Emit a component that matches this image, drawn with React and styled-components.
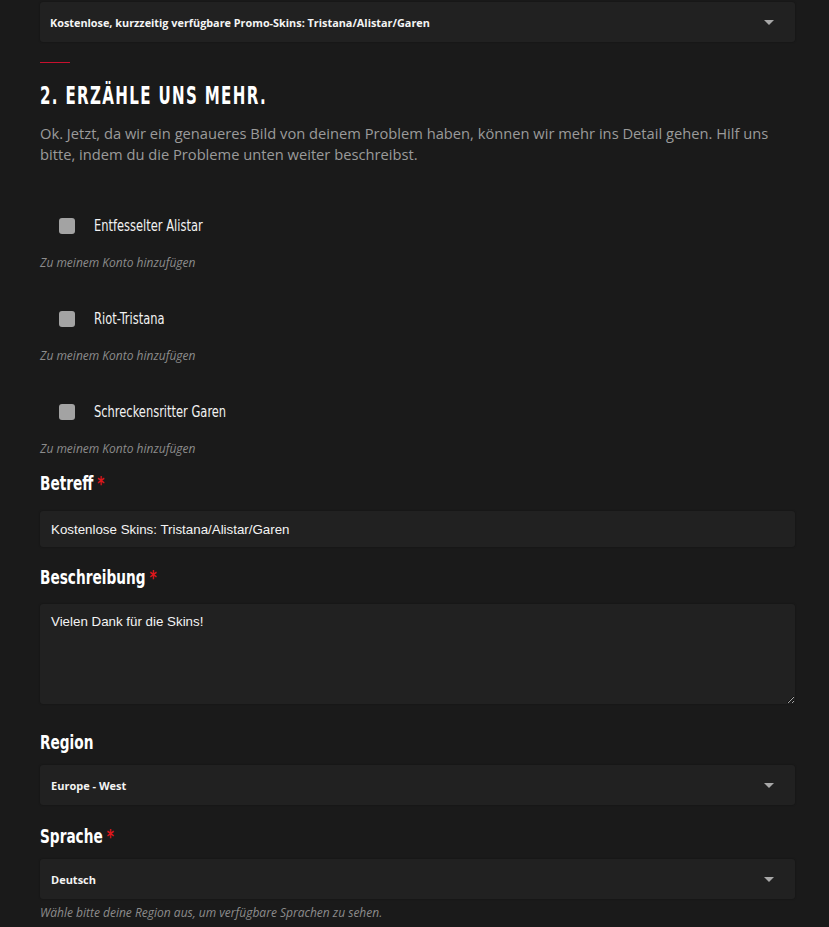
import React from "react";
import styled, { createGlobalStyle } from "styled-components";

const GlobalStyle = createGlobalStyle`
  html, body {
    margin: 0;
    padding: 0;
    background: #1a1a1a;
  }
  body {
    font-family: "Open Sans", "Liberation Sans", sans-serif;
    color: #f0f0f0;
  }
`;

const condensed = `"DejaVu Sans Condensed", "DejaVu Sans", sans-serif`;

const Page = styled.div`
  width: 755px;
  padding: 2px 0 10px 40px;
`;

const SelectBox = styled.div`
  display: flex;
  align-items: center;
  justify-content: space-between;
  height: 40px;
  margin-top: ${(p) => p.$top || 0}px;
  padding: 0 21px 0 ${(p) => p.$left || 11}px;
  background: #212121;
  border-radius: 3px;
  box-shadow: 0 0 2px rgba(0, 0, 0, 0.35);
  font-family: "Open Sans", sans-serif;
  font-weight: 700;
  font-size: ${(p) => p.$size || 11}px;
  color: #f4f4f4;
`;

const Caret = styled.span`
  width: 0;
  height: 0;
  border-left: 5px solid transparent;
  border-right: 5px solid transparent;
  border-top: 5px solid #a8a8a8;
`;

const RedRule = styled.div`
  width: 30px;
  height: 1px;
  margin-top: 20px;
  background: #c8102e;
`;

const Heading = styled.h2`
  margin: 18px 0 0;
  font-family: ${condensed};
  font-weight: 700;
  font-size: 25px;
  line-height: 30px;
  letter-spacing: 2px;
  color: #ffffff;
  white-space: nowrap;
  transform: scaleX(0.67);
  transform-origin: left center;
`;

const Intro = styled.p`
  margin: 12px 0 0;
  font-size: 14.7px;
  line-height: 21px;
  color: #9a9a9a;
`;

const SkinList = styled.div`
  margin-top: 45px;
  display: flex;
  flex-direction: column;
  gap: 32px;
`;

const SkinItem = styled.div`
  display: flex;
  flex-direction: column;
`;

const CheckRow = styled.label`
  display: flex;
  align-items: center;
  height: 32px;
  padding-left: 19px;
  gap: 19px;
`;

const CheckText = styled.span`
  display: inline-block;
  font-family: ${condensed};
  font-size: 15px;
  color: #f2f2f2;
  white-space: nowrap;
  transform: scaleX(0.85);
  transform-origin: left center;
`;

const Box = styled.span`
  width: 16px;
  height: 16px;
  border-radius: 3px;
  background: #a3a3a3;
`;

const Hint = styled.div`
  margin-top: ${(p) => p.$top || 0}px;
  font-style: italic;
  font-size: 12px;
  line-height: 16px;
  color: #8c8c8c;
`;

const Label = styled.div`
  margin-top: ${(p) => p.$top}px;
  font-family: ${condensed};
  font-weight: 700;
  font-size: 19px;
  line-height: 24px;
  color: #ffffff;
  white-space: nowrap;
  transform: scaleX(0.8);
  transform-origin: left center;
`;

const Star = styled.span`
  color: #e0161b;
  margin-left: 5px;
`;

const TextInput = styled.div`
  display: flex;
  align-items: center;
  height: 36px;
  margin-top: 16px;
  padding: 0 11px;
  background: #212121;
  border-radius: 3px;
  box-shadow: 0 0 2px rgba(0, 0, 0, 0.35);
  font-family: "Liberation Sans", Arial, sans-serif;
  font-size: 13.333px;
  color: #f4f4f4;
`;

const TextArea = styled.textarea`
  display: block;
  box-sizing: border-box;
  width: 100%;
  height: 100px;
  margin-top: 15px;
  padding: 10px 11px;
  background: #212121;
  border: none;
  border-radius: 3px;
  box-shadow: 0 0 2px rgba(0, 0, 0, 0.35);
  font-family: "Liberation Sans", Arial, sans-serif;
  font-size: 13.333px;
  color: #f4f4f4;
  outline: none;
`;

const skins = ["Entfesselter Alistar", "Riot-Tristana", "Schreckensritter Garen"];

const App = () => {
  return (
    <React.Fragment>
      <GlobalStyle />
      <Page>
        <SelectBox $left={10} $size={10.85}>
          Kostenlose, kurzzeitig verfügbare Promo-Skins: Tristana/Alistar/Garen
          <Caret />
        </SelectBox>
        <RedRule />
        <Heading>2. ERZÄHLE UNS MEHR.</Heading>
        <Intro>
          Ok. Jetzt, da wir ein genaueres Bild von deinem Problem haben, können wir mehr ins Detail gehen. Hilf uns
          bitte, indem du die Probleme unten weiter beschreibst.
        </Intro>
        <SkinList>
          {skins.map((skin) => (
            <SkinItem key={skin}>
              <CheckRow>
                <Box />
                <CheckText>{skin}</CheckText>
              </CheckRow>
              <Hint $top={13}>Zu meinem Konto hinzufügen</Hint>
            </SkinItem>
          ))}
        </SkinList>
        <Label $top={14}>
          Betreff<Star>*</Star>
        </Label>
        <TextInput>Kostenlose Skins: Tristana/Alistar/Garen</TextInput>
        <Label $top={18}>
          Beschreibung<Star>*</Star>
        </Label>
        <TextArea defaultValue="Vielen Dank für die Skins!" />
        <Label $top={26}>Region</Label>
        <SelectBox $top={11}>
          Europe - West
          <Caret />
        </SelectBox>
        <Label $top={19}>
          Sprache<Star>*</Star>
        </Label>
        <SelectBox $top={11}>
          Deutsch
          <Caret />
        </SelectBox>
        <Hint $top={6}>Wähle bitte deine Region aus, um verfügbare Sprachen zu sehen.</Hint>
      </Page>
    </React.Fragment>
  );
};

export default App;
